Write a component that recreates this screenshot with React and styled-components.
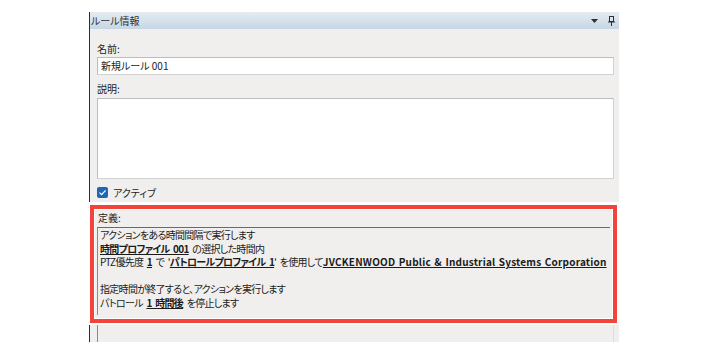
import React from "react";
import styled, { createGlobalStyle } from "styled-components";

const Global = createGlobalStyle`
  html, body { margin: 0; padding: 0; background: #ffffff; }
  body {
    font-family: "Noto Sans CJK JP", "Noto Sans", sans-serif;
    font-size: 10px;
    color: #1b1b1b;
    font-feature-settings: "palt";
  }
`;

const Page = styled.div`
  width: 708px;
  height: 354px;
  padding: 12px 0 0 89px;
  box-sizing: border-box;
`;

const Panel = styled.div`
  width: 530px;
  display: flex;
  flex-direction: column;
`;

const Upper = styled.div`
  border-left: 1px solid #2e2e2e;
  background: #f0efed;
  display: flex;
  flex-direction: column;
`;

const Header = styled.div`
  height: 17px;
  background: linear-gradient(#e5ecf2, #c6d6e4);
  display: flex;
  align-items: center;
  padding: 0 4px 0 1px;
  color: #333;
  line-height: 17px;
`;

const HeaderTitle = styled.span`
  flex: 1;
`;

const HeaderIcons = styled.div`
  display: flex;
  align-items: center;
  gap: 10px;
`;

const Body = styled.div`
  padding: 13px 5px 3px 7px;
  display: flex;
  flex-direction: column;
`;

const Label = styled.div`
  height: 14px;
  line-height: 14px;
  margin-top: ${(p) => p.$top || 0}px;
  margin-bottom: ${(p) => p.$bottom || 0}px;
`;

const TextInput = styled.div`
  height: 18px;
  box-sizing: border-box;
  border: 1px solid #bdbdbd;
  border-right-color: #d2d2d2;
  border-bottom-color: #d2d2d2;
  background: #fff;
  padding-left: 3px;
  line-height: 16px;
`;

const TextArea = styled.div`
  height: 81px;
  box-sizing: border-box;
  border: 1px solid #bdbdbd;
  border-right-color: #d2d2d2;
  border-bottom-color: #d2d2d2;
  background: #fff;
`;

const CheckRow = styled.div`
  margin-top: 6px;
  height: 14px;
  display: flex;
  align-items: center;
  gap: 5px;
`;

const CheckBox = styled.span`
  width: 11px;
  height: 11px;
  border-radius: 2px;
  background: #1f66b3;
  display: inline-flex;
  align-items: center;
  justify-content: center;
`;

const Annot = styled.div`
  background: #fff;
  padding: 3px 2px 2px 1px;
`;

const RedBox = styled.div`
  border: 4px solid #f2443a;
  background: #f0efed;
  box-shadow: inset 0 0 0 1px #ffffff;
  padding: 2px 3px 4px 3px;
  display: flex;
  flex-direction: column;
`;

const DefLabel = styled.div`
  height: 14px;
  line-height: 14px;
  margin: 0 0 2px 1px;
`;

const DefBox = styled.div`
  height: 88px;
  box-sizing: border-box;
  border-top: 1px solid #6a6a6a;
  border-left: 1px solid #8a8a8a;
  padding: 0 0 0 2px;
  line-height: 13.6px;
  white-space: pre;
  letter-spacing: -0.7px;
  word-spacing: 2px;
`;

const Line = styled.div`
  height: 13.6px;
`;

const Link = styled.span`
  font-weight: 700;
  text-decoration: underline;
  text-underline-offset: 1px;
  letter-spacing: ${(p) => (p.$latin ? "0.2px" : "-0.7px")};
  word-spacing: ${(p) => (p.$latin ? "1px" : "2px")};
`;

const Bottom = styled.div`
  height: 17px;
  border-left: 1px solid #2e2e2e;
  background: #f0efed;
  display: flex;
  padding: 0 5px 0 7px;
`;

const BottomInner = styled.div`
  flex: 1;
  border-left: 1px solid #8a8a8a;
  border-right: 1px solid #dedede;
`;

const Dropdown = () => (
  <svg width="7" height="4" viewBox="0 0 7 4">
    <path d="M0 0 H7 L3.5 4 Z" fill="#2f2f2f" />
  </svg>
);

const Pin = () => (
  <svg width="7" height="10" viewBox="0 0 7 10">
    <rect x="1.5" y="0.5" width="4" height="5" fill="none" stroke="#2f2f2f" />
    <line x1="0" y1="6" x2="7" y2="6" stroke="#2f2f2f" />
    <line x1="3.5" y1="6" x2="3.5" y2="10" stroke="#2f2f2f" />
  </svg>
);

const Check = () => (
  <svg width="9" height="9" viewBox="0 0 9 9">
    <path d="M1.5 4.6 L3.6 6.6 L7.6 2.4" fill="none" stroke="#fff" strokeWidth="1.3" />
  </svg>
);

export default function App() {
  return (
    <>
      <Global />
      <Page>
        <Panel>
          <Upper>
            <Header>
              <HeaderTitle>ルール情報</HeaderTitle>
              <HeaderIcons>
                <Dropdown />
                <Pin />
              </HeaderIcons>
            </Header>
            <Body>
              <Label $bottom={1}>名前:</Label>
              <TextInput>新規ルール 001</TextInput>
              <Label $top={7} $bottom={2}>説明:</Label>
              <TextArea />
              <CheckRow>
                <CheckBox>
                  <Check />
                </CheckBox>
                <span>アクティブ</span>
              </CheckRow>
            </Body>
          </Upper>
          <Annot>
            <RedBox>
              <DefLabel>定義:</DefLabel>
              <DefBox>
                <Line>アクションをある時間間隔で実行します</Line>
                <Line>
                  <Link>時間プロファイル 001</Link>{" の選択した時間内"}
                </Line>
                <Line>
                  {"PTZ優先度 "}<Link>1</Link>{" で '"}<Link>パトロールプロファイル 1</Link>{"' を使用して"}
                  <Link $latin>JVCKENWOOD Public &amp; Industrial Systems Corporation</Link>
                </Line>
                <Line />
                <Line>指定時間が終了すると、アクションを実行します</Line>
                <Line>
                  {"パトロール "}<Link>1 時間後</Link>{" を停止します"}
                </Line>
              </DefBox>
            </RedBox>
          </Annot>
          <Bottom>
            <BottomInner />
          </Bottom>
        </Panel>
      </Page>
    </>
  );
}
